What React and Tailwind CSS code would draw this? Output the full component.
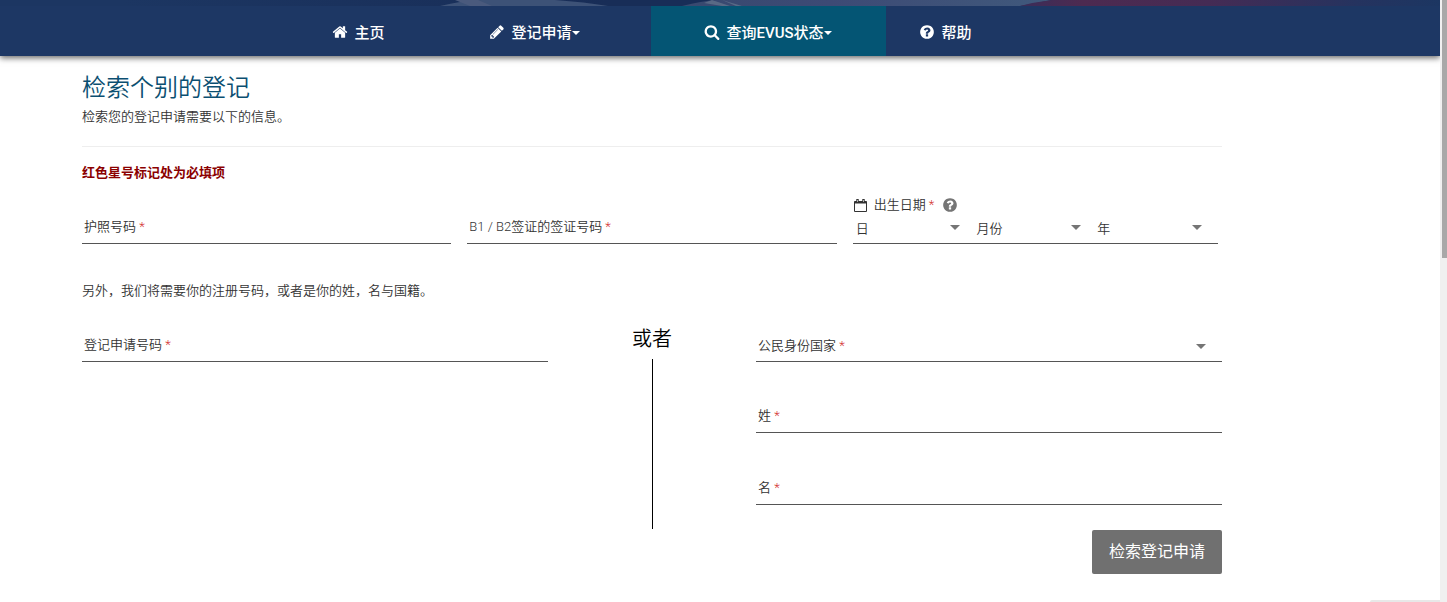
import React from "react";

const PATHS = {
  home: "M1472 992v480q0 26-19 45t-45 19h-384v-384h-256v384h-384q-26 0-45-19t-19-45v-480q0-1 .5-3t.5-3l575-474 575 474q1 2 1 6zm223-69l-62 74q-8 9-21 11h-3q-13 0-21-7l-692-577-692 577q-12 8-24 7-13-2-21-11l-62-74q-8-10-7-23.5t11-21.5l719-599q32-26 76-26t76 26l244 204v-195q0-14 9-23t23-9h192q14 0 23 9t9 23v408l219 182q10 8 11 21.5t-7 23.5z",
  search: "M1216 832q0-185-131.5-316.5t-316.5-131.5-316.5 131.5-131.5 316.5 131.5 316.5 316.5 131.5 316.5-131.5 131.5-316.5zm512 832q0 52-38 90t-90 38q-54 0-90-38l-343-342q-179 124-399 124-143 0-273.5-55.5t-225-150-150-225-55.5-273.5 55.5-273.5 150-225 225-150 273.5-55.5 273.5 55.5 225 150 150 225 55.5 273.5q0 220-124 399l343 343q37 37 37 90z",
  pencil: "M491 1536l91-91-235-235-91 91v107h128v128h107zm523-928q0-22-22-22-10 0-17 7l-542 542q-7 7-7 17 0 22 22 22 10 0 17-7l542-542q7-7 7-17zm-54-192l416 416-832 832h-416v-416zm683 96q0 53-37 90l-166 166-416-416 166-165q36-38 90-38 53 0 91 38l235 234q37 39 37 91z",
  question: "M1024 1376v-192q0-14-9-23t-23-9h-192q-14 0-23 9t-9 23v192q0 14 9 23t23 9h192q14 0 23-9t9-23zm256-672q0-88-55.5-163t-138.5-116-170-41q-243 0-371 213-15 24 8 42l132 100q7 6 19 6 16 0 25-12 53-68 86-92 34-24 86-24 48 0 85.5 26t37.5 59q0 38-20 61t-68 45q-63 28-115.5 86.5t-52.5 125.5v36q0 14 9 23t23 9h192q14 0 23-9t9-23q0-19 21.5-49.5t54.5-49.5q32-18 49-28.5t46-35 44.5-48 28-60.5 12.5-81zm384 192q0 209-103 385.5t-279.5 279.5-385.5 103-385.5-103-279.5-279.5-103-385.5 103-385.5 279.5-279.5 385.5-103 385.5 103 279.5 279.5 103 385.5z",
};

function Icon({ name, className }) {
  return (
    <svg viewBox="0 0 1792 1792" fill="currentColor" className={className} aria-hidden="true">
      <path d={PATHS[name]} />
    </svg>
  );
}

function CalendarIcon() {
  return (
    <svg viewBox="0 0 13 13" className="h-[13px] w-[13px]" fill="none" stroke="currentColor" aria-hidden="true">
      <path d="M0.5 2.5h12v10h-12z" />
      <path d="M0.5 3.5h12" strokeWidth="2" />
      <path d="M3.5 0v3.5M9.5 0v3.5" strokeWidth="2.4" />
      <path d="M3.5 1v2M9.5 1v2" stroke="#fff" strokeWidth="0.6" />
    </svg>
  );
}

function Caret({ className }) {
  return (
    <svg viewBox="0 0 10 5" fill="currentColor" className={className} aria-hidden="true">
      <path d="M0 0h10L5 5z" />
    </svg>
  );
}

function Banner() {
  return (
    <svg viewBox="0 0 1440 6" preserveAspectRatio="none" className="block h-[6px] w-full bg-[#1c3662]" aria-hidden="true">
      <defs>
        <linearGradient id="dusk">
          <stop offset="0" stopColor="#182d57" stopOpacity="0" />
          <stop offset="0.5" stopColor="#182d57" />
          <stop offset="1" stopColor="#182d57" />
        </linearGradient>
        <linearGradient id="stripe">
          <stop offset="0" stopColor="#3a2d59" />
          <stop offset="0.15" stopColor="#4d2a50" />
          <stop offset="0.45" stopColor="#452b54" />
          <stop offset="0.8" stopColor="#25335f" />
          <stop offset="1" stopColor="#1c3662" />
        </linearGradient>
        <linearGradient id="haze">
          <stop offset="0" stopColor="#38496f" />
          <stop offset="0.4" stopColor="#3d4a75" />
          <stop offset="1" stopColor="#40597c" />
        </linearGradient>
      </defs>
      <path d="M120 0H1100V6H120z" fill="url(#dusk)" />
      <path d="M440 6Q462 1 475 0H555Q585 2 608 6z" fill="#3d5277" />
      <path d="M455 0H478L492 6H470z" fill="#4a5a7d" />
      <path d="M682 6Q702 1 716 0H1052L1020 6z" fill="url(#haze)" />
      <path d="M712 0L730 6H722L704 3zM722 0L742 6H736z" fill="#596985" />
      <path d="M1020 6Q1035 2 1052 0H1440V6z" fill="url(#stripe)" />
    </svg>
  );
}

function NavItem({ icon, children, caret, className }) {
  return (
    <a href="#" className={`flex h-full items-center justify-center pt-1 text-[15px] leading-5 font-medium text-white ${className}`}>
      <Icon name={icon} className="mr-1.5 mb-0.5 h-4 w-4" />
      <span>{children}</span>
      {caret && <Caret className="h-1 w-2" />}
    </a>
  );
}

const Star = () => <span className="text-[#d32f2f]"> *</span>;

function TextField({ id, label, className = "" }) {
  return (
    <div className={`flex items-center border-b border-[#555] pt-px pb-1.5 pl-0.5 ${className}`}>
      <label htmlFor={id} className="whitespace-nowrap">
        {label}
        <Star />
      </label>
      <input id={id} type="text" className="h-5 min-w-0 flex-1 bg-transparent px-2 outline-none" />
    </div>
  );
}

function DateSelect({ label }) {
  return (
    <div className="flex flex-1 items-center">
      <select aria-label={label} className="h-5 min-w-0 flex-1 appearance-none bg-transparent outline-none">
        <option>{label}</option>
      </select>
      <Caret className="pointer-events-none mr-4 mb-1 h-[5px] w-[10px] text-[#757575]" />
    </div>
  );
}

export default function App() {
  return (
    <div lang="zh-CN" className="flex min-h-screen bg-white font-['Roboto','Noto_Sans_CJK_SC',sans-serif] text-[13px] leading-5 font-[350] text-[#333]">
      <div className="min-w-0 flex-1">
        <header className="bg-[#1d3764] shadow-[0_2px_6px_rgba(0,0,0,0.6)]">
          <Banner />
          <nav className="flex h-[50px] justify-center pr-[136px]">
            <NavItem icon="home" className="w-[120px]">主页</NavItem>
            <NavItem icon="pencil" caret className="w-[232px]">登记申请</NavItem>
            <NavItem icon="search" caret className="w-[235px] bg-[#045574]">查询EVUS状态</NavItem>
            <NavItem icon="question" className="w-[120px]">帮助</NavItem>
          </nav>
        </header>

        <main className="pt-4 pr-[218px] pl-[82px]">
          <h1 className="text-2xl leading-8 font-[350] text-[#0b4f71]">检索个别的登记</h1>
          <p className="mt-[3px]">检索您的登记申请需要以下的信息。</p>
          <hr className="mt-[19px] border-[#eee]" />
          <p className="mt-4 font-bold text-[#8b0000]">红色星号标记处为必填项</p>

          <form onSubmit={(e) => e.preventDefault()}>
            <div className="mt-3 grid grid-cols-3 items-end gap-4">
              <TextField id="passport" label="护照号码" />
              <TextField id="visa" label="B1 / B2签证的签证号码" />
              <fieldset className="mr-1 border-b border-[#555]">
                <legend className="flex items-center pl-px">
                  <CalendarIcon />
                  <span className="ml-[7px]">
                    出生日期
                    <Star />
                  </span>
                  <button type="button" aria-label="帮助" className="ml-2 text-[#757575]">
                    <Icon name="question" className="h-4 w-4" />
                  </button>
                </legend>
                <div className="flex pt-1 pb-1 pl-[3px]">
                  <DateSelect label="日" />
                  <DateSelect label="月份" />
                  <DateSelect label="年" />
                </div>
              </fieldset>
            </div>

            <p className="mt-[37px]">另外，我们将需要你的注册号码，或者是你的姓，名与国籍。</p>

            <div className="mt-[26px] flex">
              <div className="flex-1 pt-[7px]">
                <TextField id="registration" label="登记申请号码" />
              </div>
              <div className="flex w-[208px] flex-col items-center">
                <span className="text-xl leading-6 text-black">或者</span>
                <div className="mt-2 h-[170px] w-px bg-black" />
              </div>
              <div className="flex flex-1 flex-col pt-[7px]">
                <div className="flex items-center border-b border-[#555] pt-0.5 pb-[5px] pl-0.5">
                  <label htmlFor="country" className="whitespace-nowrap">
                    公民身份国家
                    <Star />
                  </label>
                  <select id="country" className="h-5 min-w-0 flex-1 appearance-none bg-transparent outline-none">
                    <option value=""></option>
                  </select>
                  <Caret className="pointer-events-none mr-4 h-[5px] w-[10px] text-[#757575]" />
                </div>
                <TextField id="surname" label="姓" className="mt-[43px]" />
                <TextField id="given" label="名" className="mt-[44px]" />
                <button type="submit" className="mt-[25px] h-11 self-end rounded-xs bg-[#707070] px-[17px] text-base font-normal whitespace-nowrap text-white">
                  检索登记申请
                </button>
              </div>
            </div>
          </form>
        </main>
      </div>

      <div className="w-[7px] bg-[#f0f0f0] pl-0.5" aria-hidden="true">
        <div className="h-[258px] bg-[#a8a8a8]" />
      </div>
      <div className="fixed right-[7px] bottom-0 h-0.5 w-[70px] rounded-tl bg-[#e8e8e8]" aria-hidden="true" />
    </div>
  );
}
